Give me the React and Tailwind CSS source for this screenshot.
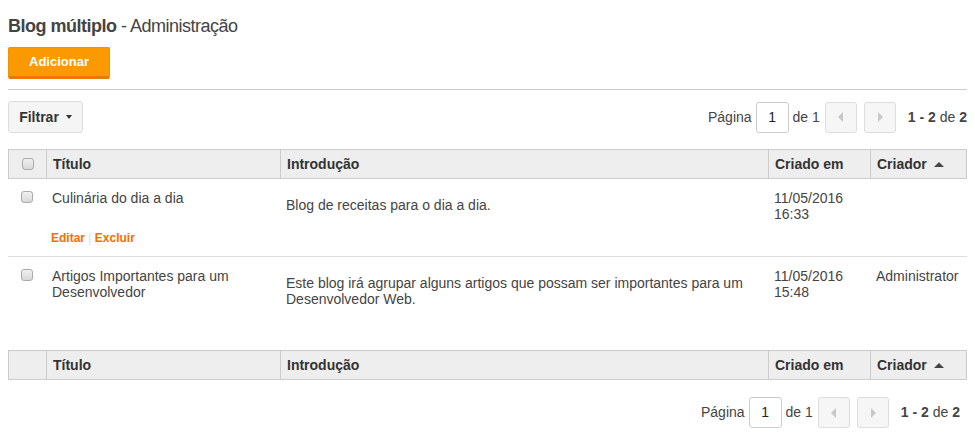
import React from 'react'

const cols = 'grid grid-cols-[38px_234px_488px_102px_97px]'

function Checkbox() {
  return (
    <span className="block w-[12px] h-[12px] rounded-[3px] border border-[#aaa] bg-gradient-to-b from-[#f0f0f0] to-[#d8d8d8]" />
  )
}

function SortArrow() {
  return (
    <svg width="10" height="6" viewBox="0 0 10 6" className="ml-[7px]">
      <path d="M0 6 L5 1 L10 6 Z" fill="#444" />
    </svg>
  )
}

function Arrow({ dir }) {
  return (
    <svg width="6" height="10" viewBox="0 0 6 10">
      {dir === 'left'
        ? <path d="M5 0 L0 5 L5 10 Z" fill="#c8c8c8" />
        : <path d="M1 0 L6 5 L1 10 Z" fill="#c8c8c8" />}
    </svg>
  )
}

function Pagination({ className }) {
  return (
    <div className={`flex items-center text-[14px] text-[#444] ${className}`}>
      <span className="mr-[4px]">Página</span>
      <div className="w-[33px] h-[31px] border border-[#ccc] rounded-[3px] flex items-center justify-center text-[#222] bg-white">1</div>
      <span className="ml-[4px] mr-[5px]">de 1</span>
      <div className="w-[32px] h-[31px] border border-[#ddd] rounded-[3px] bg-[#f6f6f6] flex items-center justify-center">
        <Arrow dir="left" />
      </div>
      <div className="w-[32px] h-[31px] border border-[#ddd] rounded-[3px] bg-[#f6f6f6] flex items-center justify-center ml-[7px]">
        <Arrow dir="right" />
      </div>
      <span className="ml-[12px]"><b>1 - 2</b> de <b>2</b></span>
    </div>
  )
}

function Header({ check }) {
  const th = 'flex items-center px-[6px] font-bold text-[#333] border-l border-[#ccc]'
  return (
    <div className={`${cols} h-[30px] bg-[#eee] border-y border-[#ccc] text-[14px]`}>
      <div className="flex items-center justify-center border-l border-[#ccc]">{check && <Checkbox />}</div>
      <div className={th}>Título</div>
      <div className={th}>Introdução</div>
      <div className={th}>Criado em</div>
      <div className={`${th} border-r`}>Criador<SortArrow /></div>
    </div>
  )
}

const rows = [
  {
    title: 'Culinária do dia a dia',
    intro: 'Blog de receitas para o dia a dia.',
    date: '11/05/2016',
    time: '16:33',
    creator: '',
    actions: true,
  },
  {
    title: 'Artigos Importantes para um Desenvolvedor',
    intro: 'Este blog irá agrupar alguns artigos que possam ser importantes para um Desenvolvedor Web.',
    date: '11/05/2016',
    time: '15:48',
    creator: 'Administrator',
    actions: false,
  },
]

export default function App() {
  return (
    <div className="w-[975px] h-[448px] bg-white px-[8px] pt-[15px] font-['Liberation_Sans',Arial,sans-serif] text-[#444] overflow-hidden">
      <h1 className="text-[18px] leading-[22px] tracking-[-0.5px] text-[#444]">
        <span className="font-bold">Blog múltiplo</span> - Administração
      </h1>
      <button className="mt-[10px] w-[102px] h-[32px] bg-[#fb9a00] border border-[#f59000] border-b-[3px] border-b-[#f07800] rounded-[2px] text-white font-bold text-[13px]">
        Adicionar
      </button>
      <div className="mt-[10px] h-px bg-[#ccc]" />
      <div className="mt-[11px] flex items-center justify-between">
        <button className="h-[32px] w-[75px] bg-[#f5f5f5] border border-[#ddd] rounded-[3px] flex items-center justify-center font-bold text-[14px] text-[#333]">
          Filtrar
          <svg width="6" height="4" viewBox="0 0 6 4" className="ml-[7px]">
            <path d="M0 0 L6 0 L3 4 Z" fill="#333" />
          </svg>
        </button>
        <Pagination />
      </div>

      <div className="mt-[16px]">
        <Header check />
        {rows.map((r, i) => (
          <div key={i} className={`${cols} h-[78px] text-[14px] leading-[16px] ${i === 0 ? 'border-b border-[#ddd]' : ''}`}>
            <div className="flex justify-center pt-[12px]"><Checkbox /></div>
            <div className="px-[6px] pt-[11px] flex flex-col">
              <div className="h-[32px]">{r.title}</div>
              {r.actions && (
                <div className="mt-[8px] ml-[-1px] text-[12px] font-bold text-[#ff6c00]">
                  Editar <span className="text-[#ddd] font-normal">|</span> Excluir
                </div>
              )}
            </div>
            <div className="px-[6px] pt-[18px]">{r.intro}</div>
            <div className="px-[6px] pt-[11px]">{r.date}<br />{r.time}</div>
            <div className="px-[6px] pt-[11px]">{r.creator}</div>
          </div>
        ))}
        <div className="mt-[15px]">
          <Header />
        </div>
      </div>
      <Pagination className="mt-[17px] justify-end pr-[7px]" />
    </div>
  )
}
